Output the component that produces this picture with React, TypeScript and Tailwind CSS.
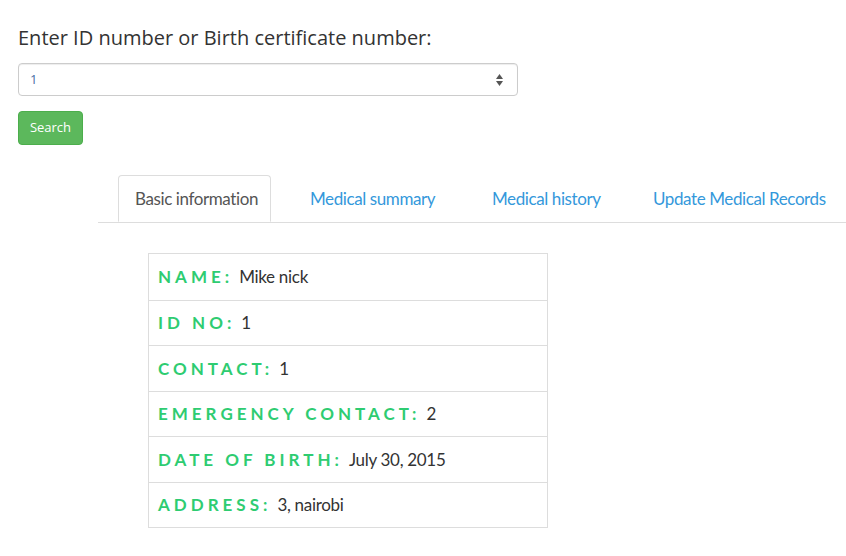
import React from 'react';

const rows: { label: string; value: string }[] = [
  { label: 'Name:', value: 'Mike nick' },
  { label: 'ID No:', value: '1' },
  { label: 'Contact:', value: '1' },
  { label: 'Emergency contact:', value: '2' },
  { label: 'Date of birth:', value: 'July 30, 2015' },
  { label: 'Address:', value: '3, nairobi' },
];

const tabs = [
  { name: 'Basic information', w: 'w-[153px]' },
  { name: 'Medical summary', w: 'w-[182px]' },
  { name: 'Medical history', w: 'w-[161px]' },
  { name: 'Update Medical Records', w: 'w-[220px]' },
];

export default function App() {
  return (
    <div className="min-h-[556px] bg-white text-[#333] font-['Lato',sans-serif]">
      <div className="px-[18px] pt-[24px]">
        <label className="block text-[20px] leading-[28px] font-['Open_Sans',sans-serif] text-[#333]">
          Enter ID number or Birth certificate number:
        </label>
        <div className="mt-[11px] w-[500px] h-[33px] border border-[#ccc] rounded-[4px] flex items-center justify-between pl-[11px] pr-[14px] shadow-[inset_0_1px_1px_rgba(0,0,0,0.075)]">
          <span className="text-[13px] text-[#4a6fa5] font-['Open_Sans',sans-serif]">1</span>
          <span className="flex flex-col items-center gap-[2px]">
            <svg width="7" height="5" viewBox="0 0 7 5"><path d="M3.5 0L7 5H0z" fill="#555" /></svg>
            <svg width="7" height="5" viewBox="0 0 7 5"><path d="M0 0h7L3.5 5z" fill="#555" /></svg>
          </span>
        </div>
        <button
          type="button"
          className="mt-[15px] w-[65px] h-[34px] rounded-[4px] bg-[#5cb85c] border border-[#4cae4c] text-white text-[13px] font-['Open_Sans',sans-serif]"
        >
          Search
        </button>
      </div>

      {/* tabs */}
      <div className="mt-[30px] ml-[98px] flex border-b border-[#ddd] pl-[20px]">
        {tabs.map((t, i) => (
          <div
            key={t.name}
            className={
              i === 0
                ? `${t.w} h-[47px] pl-[16px] flex items-center whitespace-nowrap border border-[#ddd] border-b-white -mb-px rounded-t-[4px] bg-white text-[#555] text-[17px] tracking-[-0.4px]`
                : `${t.w} h-[47px] pl-[39px] flex items-center whitespace-nowrap text-[#3498db] text-[17px] tracking-[-0.4px]`
            }
          >
            {t.name}
          </div>
        ))}
      </div>

      {/* details */}
      <div className="mt-[30px] ml-[148px] w-[400px] border border-[#ddd]">
        {rows.map((r, i) => (
          <div
            key={r.label}
            className={`h-[45.5px] flex items-center px-[9px] ${i > 0 ? 'border-t border-[#ddd]' : ''}`}
          >
            <span className="uppercase tracking-[4px] text-[#2ecc71] font-bold text-[17px]">{r.label}</span>
            <span className="ml-[6px] text-[17px] tracking-[-0.3px] text-[#333]">{r.value}</span>
          </div>
        ))}
      </div>
    </div>
  );
}
